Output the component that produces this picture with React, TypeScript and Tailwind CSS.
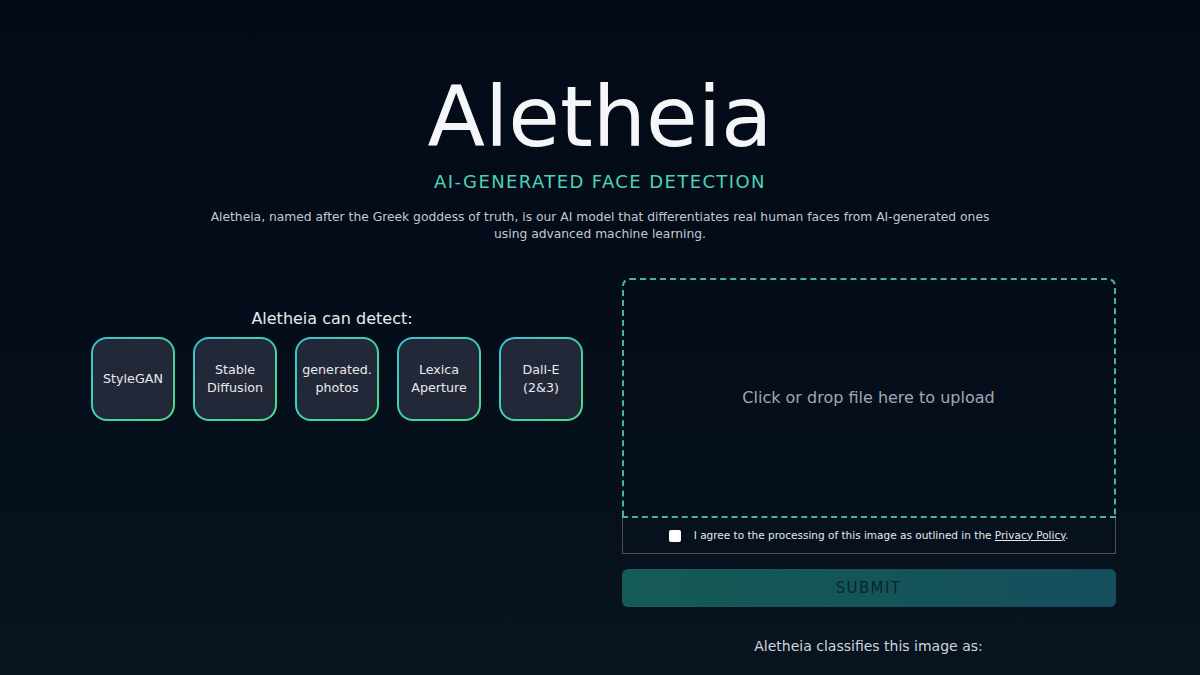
const models = [
  ['StyleGAN'],
  ['Stable', 'Diffusion'],
  ['generated.', 'photos'],
  ['Lexica', 'Aperture'],
  ['Dall-E', '(2&3)'],
];

function ModelCard({ lines }: { lines: string[] }) {
  return (
    <div className="w-[84px] h-[84px] rounded-[16px] p-[2px] bg-gradient-to-br from-[#36c6d3] to-[#4ade80]">
      <div className="w-full h-full rounded-[14px] bg-[#222838] flex flex-col items-center justify-center text-[12.7px] leading-[18px] text-[#e8eaee]">
        {lines.map((l) => (
          <span key={l}>{l}</span>
        ))}
      </div>
    </div>
  );
}

export default function App() {
  return (
    <div
      className="min-h-[675px] w-full bg-gradient-to-b from-[#040a17] via-[#050d1a] to-[#08141f] text-white overflow-hidden"
      style={{ fontFamily: '"DejaVu Sans", Verdana, sans-serif' }}
    >
      <header className="flex flex-col items-center pt-[75px]">
        <h1 className="text-[84px] leading-none text-[#f4f6f8] font-normal">Aletheia</h1>
        <p className="mt-[12px] text-[18px] leading-[22px] tracking-[1.4px] text-[#4fd1b5]">
          AI-GENERATED FACE DETECTION
        </p>
        <p className="mt-[16px] w-[800px] text-center text-[12.3px] leading-[17px] text-[#c4c8d0]">
          Aletheia, named after the Greek goddess of truth, is our AI model that differentiates real human faces from
          AI-generated ones using advanced machine learning.
        </p>
      </header>

      <main className="flex justify-center gap-[39px] pl-[7px] mt-[35px]">
        <section className="w-[491px] pt-[31px] flex flex-col items-center">
          <h2 className="text-[16px] leading-[20px] text-[#e8eaee] pr-[10px]">Aletheia can detect:</h2>
          <div className="mt-[8px] flex gap-[18px]">
            {models.map((m) => (
              <ModelCard key={m.join(' ')} lines={m} />
            ))}
          </div>
        </section>

        <section className="w-[494px] flex flex-col">
          <div className="h-[240px] border-2 border-dashed border-[#47b5a0] rounded-t-[8px] flex items-center justify-center text-[16px] text-[#a3a8b0] cursor-pointer">
            Click or drop file here to upload
          </div>
          <div className="h-[36px] border border-t-0 border-[#4b5160] flex items-center justify-center gap-[13px] text-[10.5px] text-[#e5e7eb]">
            <span className="w-[12px] h-[12px] bg-white rounded-[2px]" />
            <span>
              I agree to the processing of this image as outlined in the{' '}
              <span className="underline">Privacy Policy</span>.
            </span>
          </div>
          <button className="mt-[15px] h-[38px] rounded-[6px] bg-gradient-to-r from-[#155b55] to-[#154e5d] text-[15px] tracking-[1.4px] text-[#0a2630]">
            SUBMIT
          </button>
          <p className="mt-[29px] text-center text-[14px] leading-[20px] text-[#d1d5db]">
            Aletheia classifies this image as:
          </p>
        </section>
      </main>
    </div>
  );
}
